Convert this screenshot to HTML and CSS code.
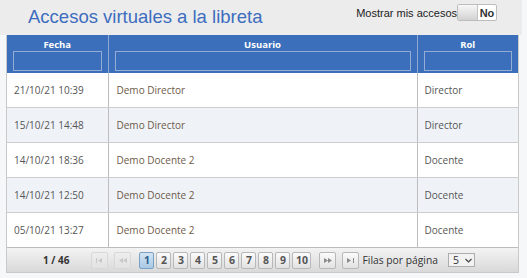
FILE: index.html
```html
<!DOCTYPE html>
<html lang="es">
<head>
  <meta charset="UTF-8" />
  <title>Accesos virtuales a la libreta</title>
  <link rel="stylesheet" href="styles.css">
</head>
<body>
  <div class="top">
    <h1 class="title">Accesos virtuales a la libreta</h1>
    <div class="mine">
      <span>Mostrar mis accesos</span>
      <span class="switch"><span class="knob"></span><span class="state">No</span></span>
    </div>
  </div>

  <div class="grid">
    <table>
      <colgroup>
        <col class="c-date">
        <col class="c-user">
        <col class="c-role">
      </colgroup>
      <thead>
        <tr>
          <th>Fecha<span class="filter"></span></th>
          <th>Usuario<span class="filter"></span></th>
          <th>Rol<span class="filter"></span></th>
        </tr>
      </thead>
      <tbody>
        <tr><td>21/10/21 10:39</td><td class="user">Demo Director</td><td>Director</td></tr>
        <tr><td>15/10/21 14:48</td><td class="user">Demo Director</td><td>Director</td></tr>
        <tr><td>14/10/21 18:36</td><td class="user">Demo Docente 2</td><td>Docente</td></tr>
        <tr><td>14/10/21 12:50</td><td class="user">Demo Docente 2</td><td>Docente</td></tr>
        <tr><td>05/10/21 13:27</td><td class="user">Demo Docente 2</td><td>Docente</td></tr>
      </tbody>
    </table>

    <div class="pager">
      <span class="count">1 / 46</span>
      <span class="btn nav off first"><svg width="7" height="5" viewBox="0 0 7 5"><rect x="0" y="0" width="1" height="5"/><path d="M6 0 L2 2.5 L6 5 Z"/></svg></span>
      <span class="btn nav off"><svg width="8" height="5" viewBox="0 0 8 5"><path d="M4 0 L0 2.5 L4 5 Z M8 0 L4 2.5 L8 5 Z"/></svg></span>
      <span class="pages">
        <span class="btn page active">1</span>
        <span class="btn page">2</span>
        <span class="btn page">3</span>
        <span class="btn page">4</span>
        <span class="btn page">5</span>
        <span class="btn page">6</span>
        <span class="btn page">7</span>
        <span class="btn page">8</span>
        <span class="btn page">9</span>
        <span class="btn page wide">10</span>
      </span>
      <span class="btn nav next"><svg width="8" height="5" viewBox="0 0 8 5"><path d="M0 0 L4 2.5 L0 5 Z M4 0 L8 2.5 L4 5 Z"/></svg></span>
      <span class="btn nav"><svg width="7" height="5" viewBox="0 0 7 5"><path d="M0 0 L4 2.5 L0 5 Z"/><rect x="6" y="0" width="1" height="5"/></svg></span>
      <span class="rows">Filas por página</span>
      <span class="select">5<svg width="7" height="5" viewBox="0 0 7 5"><path d="M0.5 1 L3.5 4 L6.5 1" fill="none" stroke="#444" stroke-width="1.2"/></svg></span>
    </div>
  </div>
</body>
</html>
```

FILE: styles.css
```css
body {
  margin: 0;
  background: #f6f7f8;
  font-family: 'Open Sans', sans-serif;
  font-size: 10px;
  color: #555;
}
.top {
  display: flex;
  justify-content: space-between;
  align-items: flex-start;
  box-sizing: border-box;
  height: 35px;
  width: 522px;
  padding: 0 25px 0 28px;
  background: #ececec;
}
.title {
  margin: 0;
  padding-top: 6px;
  font-family: 'Liberation Sans', Arial, sans-serif;
  font-size: 18.5px;
  font-weight: normal;
  color: #3d6dbf;
}
.mine {
  display: flex;
  align-items: center;
  margin-top: 4px;
  font-family: 'Liberation Sans', Arial, sans-serif;
  font-size: 11px;
  color: #222;
}
.switch {
  display: flex;
  box-sizing: border-box;
  width: 40px;
  height: 17px;
  border: 1px solid #bdbdbd;
  border-radius: 2px;
  background: #fff;
  overflow: hidden;
}
.knob {
  width: 19px;
  background: linear-gradient(#f7f7f7, #d2d2d2);
  border-right: 1px solid #c4c4c4;
}
.state {
  flex: 1;
  text-align: center;
  line-height: 17px;
  font-weight: bold;
  color: #333;
}
.grid {
  width: 513px;
  margin-left: 6px;
  box-sizing: border-box;
  border: 1px solid #c9c9c9;
  border-top: none;
  background: #fff;
}
table {
  width: 100%;
  table-layout: fixed;
  border-collapse: collapse;
}
.c-date { width: 101px; }
.c-user { width: 309px; }
th {
  background: #3b6fbb;
  color: #fff;
  font-size: 9.5px;
  font-weight: bold;
  line-height: 12px;
  padding: 4px 6px 2px;
  text-align: center;
  vertical-align: top;
  border-left: 1px solid #8fa9d4;
}
th:first-child {
  border-left: none;
}
.filter {
  display: block;
  box-sizing: border-box;
  height: 20px;
  border: 1px solid #95acd4;
  background: #3b6fbb;
}
td {
  height: 34px;
  padding: 0 7px;
  border-bottom: 1px solid #cdcdcd;
  border-left: 1px solid #bdbdbd;
  white-space: nowrap;
}
td:first-child {
  border-left: none;
}
td.user {
  padding-left: 8px;
  color: #6d5a49;
}
tbody tr:nth-child(even) td {
  background: #eff3f8;
}
tbody tr:last-child td {
  border-bottom: none;
}
.pager {
  display: flex;
  align-items: center;
  height: 24px;
  border-top: 1px solid #bcbcbc;
  background: linear-gradient(#f3f3f3, #d9d9d9);
  color: #333;
}
.count {
  margin-left: 36px;
  font-weight: bold;
  font-size: 10px;
}
.btn {
  display: flex;
  align-items: center;
  justify-content: center;
  box-sizing: border-box;
  height: 17px;
  border: 1px solid #b8b8b8;
  border-radius: 2px;
  background: linear-gradient(#fbfbfb, #e2e2e2);
  font-weight: bold;
  font-size: 10.5px;
  color: #555;
}
.nav {
  width: 17px;
  margin-left: 6px;
  fill: #8a8a8a;
}
.nav.first {
  margin-left: 22px;
}
.nav.off {
  border-color: #d8d8d8;
  background: linear-gradient(#eeeeee, #e2e2e2);
  fill: #c8c8c8;
}
.nav.next {
  margin-left: 8px;
}
.pages {
  display: flex;
  gap: 2px;
  margin-left: 8px;
}
.page {
  width: 15px;
}
.page.wide {
  width: 19px;
}
.page.active {
  border-color: #7aa0c4;
  background: linear-gradient(#d2e4f3, #a9c9e4);
  color: #2d5f8e;
}
.rows {
  margin-left: 3px;
  font-size: 10.3px;
}
.select {
  display: flex;
  align-items: center;
  gap: 6px;
  box-sizing: border-box;
  width: 27px;
  height: 14px;
  margin-left: 10px;
  padding-left: 4px;
  border: 1px solid #adadad;
  background: #f2f2f2;
  font-size: 10.5px;
}
```
